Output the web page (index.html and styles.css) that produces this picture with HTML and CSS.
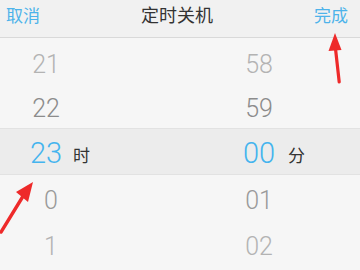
FILE: index.html
```html
<!DOCTYPE html>
<html lang="zh-CN">
<head>
<meta charset="utf-8">
<title>定时关机</title>
<link rel="stylesheet" href="styles.css">
</head>
<body>
<div class="screen">
  <header class="bar">
    <span class="btn btn-left">取消</span>
    <span class="title">定时关机</span>
    <span class="btn btn-right">完成</span>
  </header>
  <main class="picker">
    <div class="row r21 c-light"><span class="num">21</span><span class="unit"></span><span class="num">58</span><span class="unit"></span></div>
    <div class="row r22 c-mid"><span class="num">22</span><span class="unit"></span><span class="num">59</span><span class="unit"></span></div>
    <div class="row sel"><span class="num">23</span><span class="unit">时</span><span class="num">00</span><span class="unit unit-r">分</span></div>
    <div class="row r0 c-mid2"><span class="num shift">0</span><span class="unit"></span><span class="num">01</span><span class="unit"></span></div>
    <div class="row r1 c-light"><span class="num shift">1</span><span class="unit"></span><span class="num">02</span><span class="unit"></span></div>
  </main>
  <svg class="arrow arrow-top" width="360" height="270" viewBox="0 0 360 270">
    <path d="M335 33 L328.5 51 L341.5 50 Z" fill="#ee2a2a"/>
    <path d="M335.2 46 L339.2 82" stroke="#ee2a2a" stroke-width="3.2" stroke-linecap="round"/>
  </svg>
  <svg class="arrow arrow-left" width="360" height="270" viewBox="0 0 360 270">
    <path d="M33 182 L16 192 L28 202 Z" fill="#ee2a2a"/>
    <path d="M25 193 L1 232" stroke="#ee2a2a" stroke-width="3.4" stroke-linecap="round"/>
  </svg>
</div>
</body>
</html>
```

FILE: styles.css
```css
* { box-sizing: border-box; }
html, body {
  margin: 0;
  padding: 0;
  background: #f6f6f6;
}
.screen {
  position: relative;
  width: 360px;
  height: 270px;
  overflow: hidden;
  background: #f6f6f6;
  font-family: "Noto Sans CJK SC", "Noto Sans", sans-serif;
}
.bar {
  display: grid;
  grid-template-columns: 1fr auto 1fr;
  align-items: center;
  height: 38px;
  padding: 0 12px 8px 6px;
  background: #f1f1f1;
  border-bottom: 1px solid #d9d9d9;
  line-height: 29px;
}
.btn {
  font-size: 17px;
  color: #4db3ea;
}
.btn-right { justify-self: end; }
.title {
  font-size: 18px;
  color: #333;
}
.picker {
  display: flex;
  flex-direction: column;
  padding-top: 4px;
}
.row {
  display: grid;
  grid-template-columns: 32px 181px 32px 1fr;
  padding-left: 30px;
  font-family: Roboto, "Liberation Sans", sans-serif;
  font-weight: 300;
  font-size: 25px;
}
.num { text-align: center; white-space: nowrap; }
.num.shift { padding-left: 10px; }
.unit {
  font-family: "Noto Sans CJK SC", sans-serif;
  font-weight: 400;
  font-size: 17px;
  color: #333;
  padding-left: 11px;
}
.unit-r { padding-left: 13px; }
.c-light { color: #b3b3b3; }
.c-mid { color: #8c8c8c; }
.c-mid2 { color: #9a9a9a; }
.r21 { height: 45px; line-height: 45px; }
.r22 { height: 41px; line-height: 44px; }
.sel {
  height: 47px;
  padding-top: 4px;
  line-height: 43px;
  background: #ececec;
  border-top: 1px solid #e2e2e2;
  border-bottom: 1px solid #e2e2e2;
  font-size: 29px;
  color: #44b4ee;
}
.sel .num { line-height: 41px; }
.r0 { padding-top: 3px; line-height: 46px; }
.r1 { line-height: 45px; }
.arrow {
  position: absolute;
  left: 0;
  top: 0;
  pointer-events: none;
}
```
